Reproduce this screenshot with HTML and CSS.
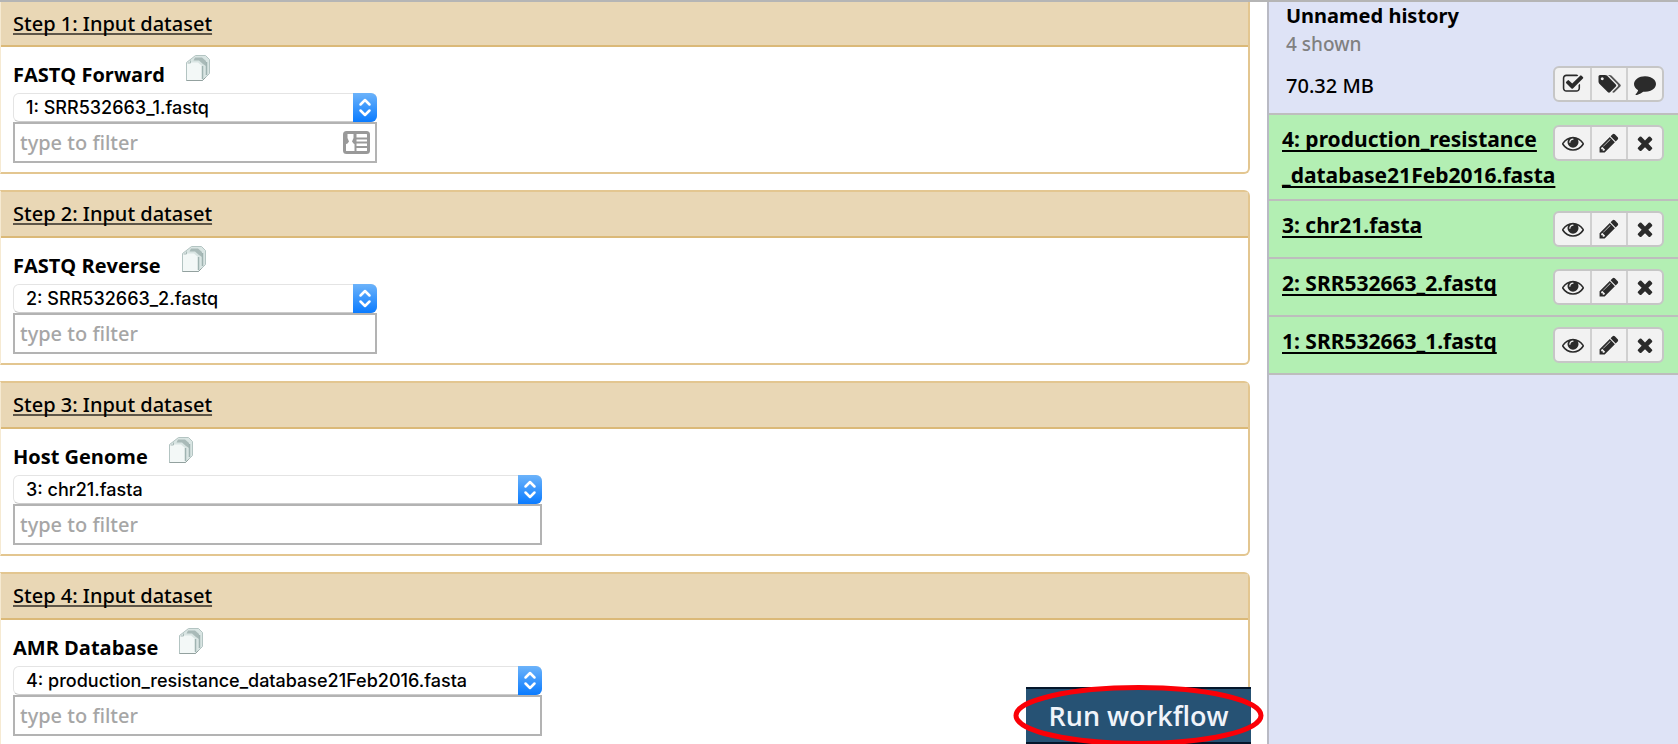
FILE: index.html
```html
<!DOCTYPE html>
<html lang="en">
<head>
<meta charset="utf-8">
<title>Run workflow</title>
<link rel="stylesheet" href="styles.css">
</head>
<body>
<svg class="sprite" aria-hidden="true">
  <symbol id="i-stack" viewBox="0 0 26 28">
    <path d="M10.500 1.500h10l4 4v14l-7 7h-16v-18z" fill="#d9e5e3" stroke="#b3c4c2"/>
    <path d="M10 3.500h7l4 3.500v5l-3-2-4-3.500h-5.500z" fill="#a9bab8"/>
    <path d="M2 8.500h11l4 3.500v14h-15z" fill="#f3f8f7"/>
    <path d="M17.500 12v13M21.500 8v13" stroke="#9fb3b1" stroke-width="1.500"/>
    <path d="M5.500 6.500v2.500h-3" fill="none" stroke="#a9bab8"/>
    <path d="M1.500 26.500h16l3-3" fill="none" stroke="#93a19f"/>
  </symbol>
  <symbol id="i-arrows" viewBox="0 0 24 29">
    <path d="M7.500 11.500l4.500-4.500 4.500 4.500M7.500 17.500l4.500 4.500 4.500-4.500" fill="none" stroke="#fff" stroke-width="2.500" stroke-linecap="round" stroke-linejoin="round"/>
  </symbol>
  <symbol id="i-card" viewBox="0 0 27 23">
    <rect x="1.500" y="1.500" width="24" height="20" rx="2" fill="#fff" stroke="#999" stroke-width="3"/>
    <path d="M12.500 2v19M12.500 7.500h12M12.500 11.500h12M12.500 16h12" stroke="#999" stroke-width="2"/>
    <path d="M2 2h2.500v5l1.500 3.500-1.500 2-2.500 1zM12.500 2h-2v5l-1.500 3.500 1.500 2 2 1z" fill="#999"/>
  </symbol>
  <symbol id="i-check" viewBox="0 0 1792 1792"><path d="M1472 930v318q0 119-84.500 203.500t-203.500 84.500h-832q-119 0-203.500-84.500t-84.500-203.500v-832q0-119 84.500-203.500t203.500-84.500h832q63 0 117 25 15 7 18 23 3 17-9 29l-49 49q-10 10-23 10-3 0-9-2-23-6-45-6h-832q-66 0-113 47t-47 113v832q0 66 47 113t113 47h832q66 0 113-47t47-113v-254q0-13 9-22l64-64q10-10 23-10 6 0 12 3 20 8 20 29zm231-489l-814 814q-24 24-57 24t-57-24l-430-430q-24-24-24-57t24-57l110-110q24-24 57-24t57 24l263 263 647-647q24-24 57-24t57 24l110 110q24 24 24 57t-24 57z"/></symbol>
  <symbol id="i-tags" viewBox="0 0 2048 1792"><path d="M576 448q0-53-37.500-90.500t-90.500-37.500-90.500 37.500-37.500 90.500 37.500 90.500 90.500 37.500 90.500-37.500 37.500-90.500zm1067 576q0 53-37 90l-491 492q-39 37-91 37-53 0-90-37l-715-716q-38-37-64.500-101t-26.500-117v-416q0-52 38-90t90-38h416q53 0 117 26.500t102 64.500l715 714q37 39 37 91z"/><path fill="#555" d="M2027 1024q0 53-37 90l-491 492q-39 37-91 37-36 0-59-14t-53-45l470-470q37-37 37-90 0-52-37-91l-715-714q-38-38-102-64.500t-117-26.500h224q53 0 117 26.500t102 64.500l715 714q37 39 37 91z"/></symbol>
  <symbol id="i-comment" viewBox="0 0 1792 1792"><path d="M1792 896q0 174-120 321.500t-326 233-450 85.500q-70 0-145-8-198 175-460 242-49 14-114 22-17 2-30.500-9t-17.500-29v-1q-3-4-.5-12t2-10 4.500-9.500l6-9 7-8.500 8-9q7-8 31-34.500t34.500-38 31-39.500 32.500-51 27-59 26-76q-157-89-247.500-220t-90.500-281q0-130 71-248.500t191-204.500 286-136.500 348-50.500q244 0 450 85.500t326 233 120 321.500z"/></symbol>
  <symbol id="i-eye" viewBox="0 0 1792 1792"><path d="M1664 960q-152-236-381-353 61 104 61 225 0 185-131.500 316.500t-316.500 131.500-316.500-131.500-131.500-316.500q0-121 61-225-229 117-381 353 133 205 333.500 326.500t434.500 121.500 434.500-121.500 333.500-326.500zm-720-384q0-20-14-34t-34-14q-125 0-214.500 89.500t-89.500 214.500q0 20 14 34t34 14 34-14 14-34q0-86 61-147t147-61q20 0 34-14t14-34zm848 384q0 34-20 69-140 230-376.500 368.500t-499.500 138.500-499.500-139-376.500-368q-20-35-20-69t20-69q140-229 376.500-368t499.500-139 499.500 139 376.500 368q20 35 20 69z"/></symbol>
  <symbol id="i-pencil" viewBox="0 0 1792 1792"><path d="M491 1536l91-91-235-235-91 91v107h128v128h107zm523-928q0-22-22-22-10 0-17 7l-542 542q-7 7-7 17 0 22 22 22 10 0 17-7l542-542q7-7 7-17zm-54-192l416 416-832 832h-416v-416zm683 96q0 53-37 90l-166 166-416-416 166-165q36-38 90-38 53 0 91 38l235 234q37 39 37 91z"/></symbol>
  <symbol id="i-times" viewBox="0 0 1792 1792"><path d="M1490 1322q0 40-28 68l-136 136q-28 28-68 28t-68-28l-294-294-294 294q-28 28-68 28t-68-28l-136-136q-28-28-28-68t28-68l294-294-294-294q-28-28-28-68t28-68l136-136q28-28 68-28t68 28l294 294 294-294q28-28 68-28t68 28l136 136q28 28 28 68t-28 68l-294 294 294 294q28 28 28 68z"/></symbol>
</svg>
<div class="page">
  <main class="steps">
    <section class="step">
      <h2 class="step-head"><a class="step-link" href="#s1">Step 1: Input dataset</a></h2>
      <div class="step-body" id="s1">
        <div class="label-row"><label for="d1">FASTQ Forward</label><svg class="stack"><use href="#i-stack"/></svg></div>
        <div class="field">
          <div class="pick"><select id="d1"><option>1: SRR532663_1.fastq</option></select><svg class="arrows"><use href="#i-arrows"/></svg></div>
          <div class="pick"><input type="text" placeholder="type to filter" aria-label="Filter FASTQ Forward"><svg class="contact"><use href="#i-card"/></svg></div>
        </div>
      </div>
    </section>
    <section class="step">
      <h2 class="step-head"><a class="step-link" href="#s2">Step 2: Input dataset</a></h2>
      <div class="step-body" id="s2">
        <div class="label-row"><label for="d2">FASTQ Reverse</label><svg class="stack"><use href="#i-stack"/></svg></div>
        <div class="field">
          <div class="pick"><select id="d2"><option>2: SRR532663_2.fastq</option></select><svg class="arrows"><use href="#i-arrows"/></svg></div>
          <input type="text" placeholder="type to filter" aria-label="Filter FASTQ Reverse">
        </div>
      </div>
    </section>
    <section class="step">
      <h2 class="step-head"><a class="step-link" href="#s3">Step 3: Input dataset</a></h2>
      <div class="step-body" id="s3">
        <div class="label-row"><label for="d3">Host Genome</label><svg class="stack"><use href="#i-stack"/></svg></div>
        <div class="field wide">
          <div class="pick"><select id="d3"><option>3: chr21.fasta</option></select><svg class="arrows"><use href="#i-arrows"/></svg></div>
          <input type="text" placeholder="type to filter" aria-label="Filter Host Genome">
        </div>
      </div>
    </section>
    <section class="step">
      <h2 class="step-head"><a class="step-link" href="#s4">Step 4: Input dataset</a></h2>
      <div class="step-body" id="s4">
        <div class="label-row"><label for="d4">AMR Database</label><svg class="stack"><use href="#i-stack"/></svg></div>
        <div class="field wide">
          <div class="pick"><select id="d4"><option>4: production_resistance_database21Feb2016.fasta</option></select><svg class="arrows"><use href="#i-arrows"/></svg></div>
          <input type="text" placeholder="type to filter" aria-label="Filter AMR Database">
        </div>
      </div>
    </section>
    <div class="run">
      <button class="run-button" type="button">Run workflow</button>
      <svg class="ring" viewBox="0 0 250 61" aria-hidden="true"><ellipse cx="125" cy="30.500" rx="122.500" ry="28" fill="none" stroke="#fb0007" stroke-width="5"/></svg>
    </div>
  </main>
  <aside class="history">
    <header class="history-head">
      <h1 class="history-title">Unnamed history</h1>
      <p class="shown">4 shown</p>
      <div class="size-row">
        <span>70.32 MB</span>
        <div class="actions">
          <button type="button" aria-label="Select datasets"><svg><use href="#i-check"/></svg></button>
          <button type="button" aria-label="Edit tags"><svg><use href="#i-tags"/></svg></button>
          <button type="button" aria-label="Edit annotation"><svg><use href="#i-comment"/></svg></button>
        </div>
      </div>
    </header>
    <ul class="datasets">
      <li class="dataset">
        <a class="dataset-link" href="#h4">4: production_resistance<wbr>_database21Feb2016.fasta</a>
        <div class="actions">
          <button type="button" aria-label="View data"><svg><use href="#i-eye"/></svg></button>
          <button type="button" aria-label="Edit attributes"><svg><use href="#i-pencil"/></svg></button>
          <button type="button" aria-label="Delete"><svg><use href="#i-times"/></svg></button>
        </div>
      </li>
      <li class="dataset">
        <a class="dataset-link" href="#h3">3: chr21.fasta</a>
        <div class="actions">
          <button type="button" aria-label="View data"><svg><use href="#i-eye"/></svg></button>
          <button type="button" aria-label="Edit attributes"><svg><use href="#i-pencil"/></svg></button>
          <button type="button" aria-label="Delete"><svg><use href="#i-times"/></svg></button>
        </div>
      </li>
      <li class="dataset">
        <a class="dataset-link" href="#h2">2: SRR532663_2.fastq</a>
        <div class="actions">
          <button type="button" aria-label="View data"><svg><use href="#i-eye"/></svg></button>
          <button type="button" aria-label="Edit attributes"><svg><use href="#i-pencil"/></svg></button>
          <button type="button" aria-label="Delete"><svg><use href="#i-times"/></svg></button>
        </div>
      </li>
      <li class="dataset">
        <a class="dataset-link" href="#h1">1: SRR532663_1.fastq</a>
        <div class="actions">
          <button type="button" aria-label="View data"><svg><use href="#i-eye"/></svg></button>
          <button type="button" aria-label="Edit attributes"><svg><use href="#i-pencil"/></svg></button>
          <button type="button" aria-label="Delete"><svg><use href="#i-times"/></svg></button>
        </div>
      </li>
    </ul>
  </aside>
</div>
</body>
</html>
```
FILE: styles.css
```css
* { box-sizing: border-box; }
body {
  margin: 0;
  font-family: "Noto Sans", "Open Sans", sans-serif;
  font-size: 20px;
  font-weight: 500;
  line-height: 28px;
  color: #000;
  background: #fff;
}
h1, h2, p, ul { margin: 0; padding: 0; font-size: 20px; }
ul { list-style: none; }
.sprite { display: none; }
.page {
  display: flex;
  height: 100vh;
  overflow: hidden;
  border-top: 2px solid #b5b5b5;
}

.steps {
  position: relative;
  flex: 1;
  min-width: 0;
  overflow: hidden;
  display: flex;
  flex-direction: column;
  gap: 16px;
  padding-right: 17px;
}
.step {
  flex: none;
  border: 2px solid #e3c690;
  border-left: 1px solid #f6ead2;
  border-radius: 0 6px 6px 0;
  background: #fff;
}
.step:first-child { border-top: 0; border-top-right-radius: 0; }
.step-head {
  height: 46px;
  padding: 8px 12px;
  background: #e9d7b5;
  border-bottom: 2px solid #dbb978;
  font-weight: 500;
}
.step:first-child .step-head { height: 45px; }
.step-link { color: #000; text-decoration-thickness: 2px; text-underline-offset: 2px; text-decoration-skip-ink: none; text-decoration-color: #5e5648; }
.step-body { padding: 7px 12px 9px; }
.label-row {
  display: flex;
  align-items: flex-start;
  gap: 20px;
  height: 39px;
  font-weight: 700;
}
.label-row label { padding-top: 7px; font-family: "Open Sans", sans-serif; }
.stack { width: 26px; height: 28px; }
.field { width: 364px; max-width: 100%; }
.field.wide { width: 529px; }
.pick { position: relative; }
select, input { display: block; width: 100%; margin: 0; color: #000; }
select {
  appearance: none;
  height: 29px;
  padding: 0 30px 0 12px;
  border: 1px solid #e4e4e4;
  border-bottom-color: #ccc;
  border-radius: 6px;
  background: #fff;
  font: 500 18px/24px Inter, sans-serif;
}
.arrows {
  position: absolute;
  top: 0;
  right: 0;
  width: 24px;
  height: 29px;
  border-radius: 0 6px 6px 0;
  background: linear-gradient(#6cb3fa, #0a7bff);
}
input {
  height: 41px;
  padding: 0 5px;
  border: 2px solid #b3b3b3;
  background: #fff;
  font: 500 20px/28px "Noto Sans", sans-serif;
}
input::placeholder { color: #a6a6a6; opacity: 1; }
.contact { position: absolute; top: 9px; right: 7px; width: 27px; height: 23px; }

.run {
  position: absolute;
  right: 3px;
  bottom: 0;
  padding: 0 13px;
}
.run-button {
  display: block;
  width: 225px;
  height: 57px;
  padding: 0;
  border: 0 solid #04162b;
  border-width: 2px 0;
  background: #265274;
  color: #f0f4fa;
  font: 600 27px/50px "Open Sans", sans-serif;
}
.ring { position: absolute; left: 0; bottom: -2px; width: 100%; height: 61px; pointer-events: none; }

.history {
  flex: none;
  width: 411px;
  border-left: 2px solid #b9bac4;
  background: #dee3f6;
}
.history-head { height: 113px; padding: 0 14px 0 17px; border-bottom: 2px solid #bebebe; }
.history-title { font-weight: 700; }
.shown { color: #808080; font-size: 19px; }
.size-row { display: flex; justify-content: space-between; padding-top: 8px; line-height: 40px; }
.actions {
  flex: none;
  display: flex;
  height: 36px;
  border: 2px solid #c6c6c6;
  border-radius: 6px;
  background: #f2f2f2;
  overflow: hidden;
}
.actions button {
  display: flex;
  align-items: center;
  justify-content: center;
  width: 35px;
  padding: 0;
  border: 0;
  background: none;
}
.actions button + button { width: 36px; border-left: 2px solid #d0d0d0; }
.actions svg { width: 24px; height: 22px; fill: #2b2b2b; }
.dataset {
  position: relative;
  display: flex;
  align-items: flex-start;
  justify-content: space-between;
  min-height: 58px;
  padding: 6px 14px 6px 13px;
  background: #b3efb3;
  border-bottom: 2px solid #bdbdbd;
}
.dataset .actions { position: absolute; top: 10px; right: 14px; }
.dataset-link {
  color: #000;
  font-size: 21px;
  font-weight: 700;
  line-height: 36px;
  text-decoration-thickness: 2px;
  text-underline-offset: 3px;
  text-decoration-skip-ink: none;
}
```
